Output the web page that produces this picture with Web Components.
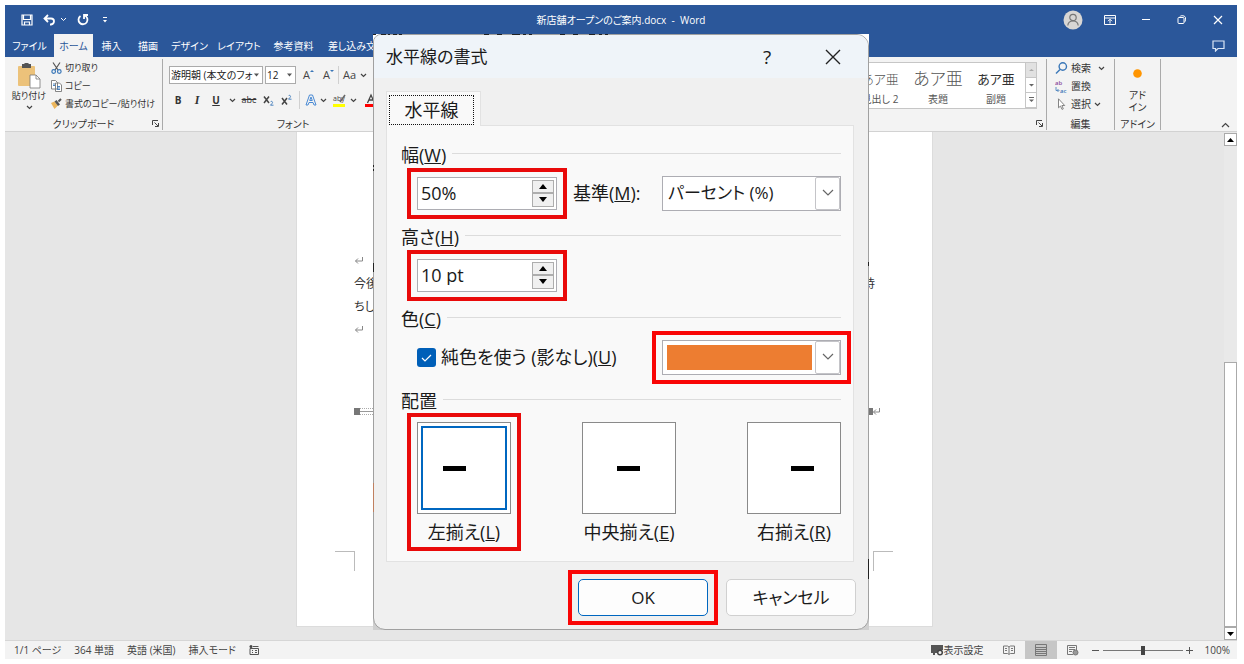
<!DOCTYPE html>
<html lang="ja">
<head>
<meta charset="utf-8">
<title>新店舗オープンのご案内.docx - Word</title>
<style>
  body { margin: 5px 7px 5px 5px; background: #fff; font: 10px/12px "Open Sans", "Noto Sans CJK JP", sans-serif; font-feature-settings: "palt"; color: #333; }
</style>
</head>
<body>
<word-app></word-app>
<script>
const base = `*{box-sizing:border-box} button,select,input{font:inherit;font-feature-settings:inherit;color:inherit;margin:0;border:0;padding:0;background:none} svg{display:block;flex:none} button{display:flex;align-items:center;justify-content:center}`;
function define(name, css, html) {
  const t = document.createElement('template');
  t.innerHTML = `<style>${base}${css}</style>${html}`;
  customElements.define(name, class extends HTMLElement {
    constructor() { super(); this.attachShadow({ mode: 'open' }).append(t.content.cloneNode(true)); }
  });
}
const chev = `<svg class="chev" width="7" height="5" viewBox="0 0 7 5" fill="none" stroke="#444" stroke-width="1.2"><path d="M1 1l2.500 2.500L6 1"/></svg>`;

define('title-bar', `
  :host{display:grid;grid-template-columns:1fr auto 1fr;align-items:center;height:29px;color:#fff;background:#2b579a}
  .quick{display:flex;align-items:center;padding-left:16px;gap:10px}
  .quick .undo{gap:4px}
  .win{display:flex;align-items:center;justify-content:flex-end;padding-right:1px}
  .win button{width:36px;height:24px}
  .win .user{width:38px}
  .title{white-space:pre;padding-top:1px}
  `, `
  <div class="quick">
    <button aria-label="上書き保存"><svg width="12" height="12" viewBox="0 0 12 12" fill="none" stroke="#fff" stroke-width="1.200"><path d="M1 1h10v10H1zM2.500 1v4.500h7V1M3.500 11V8h5v3"/></svg></button>
    <button class="undo" aria-label="元に戻す"><svg width="13" height="12" viewBox="0 0 13 12" fill="none" stroke="#fff" stroke-width="1.800"><path d="M5 1L1.500 4.500L5 8M2 4.500h6c4 0 4 5.500 0 6H7"/></svg><svg width="7" height="5" viewBox="0 0 7 5" fill="none" stroke="#fff"><path d="M1 1l2.500 2.500L6 1"/></svg></button>
    <button aria-label="やり直し"><svg width="12" height="12" viewBox="0 0 12 12" fill="none" stroke="#fff" stroke-width="1.800"><path d="M11 1H7v4M7.500 1.500a4.500 4.500 0 1 1-4 .5"/></svg></button>
    <button aria-label="クイック アクセスのユーザー設定"><svg width="12" height="8" viewBox="0 0 12 8" fill="#fff"><path d="M4 1h4v1H4zM4 4h4l-2 2.500z"/></svg></button>
  </div>
  <div class="title">新店舗オープンのご案内.docx  -  Word</div>
  <div class="win">
    <button class="user" aria-label="アカウント"><svg width="20" height="20" viewBox="0 0 20 20"><circle cx="10" cy="10" r="9.500" fill="#d8d6d4"/><g fill="none" stroke="#777" stroke-width="1.200"><circle cx="10" cy="7.500" r="3.200"/><path d="M4.800 15.500c.6-6 9.800-6 10.400 0"/></g></svg></button>
    <button aria-label="リボンの表示オプション"><svg width="12" height="10" viewBox="0 0 12 10" fill="none" stroke="#fff"><path d="M.5.5h11v9H.5zM.5 3h11M6 8.500v-4M4 6.200l2-2 2 2"/></svg></button>
    <button aria-label="最小化"><svg width="10" height="10" viewBox="0 0 10 10" stroke="#fff"><path d="M1 4.500h8"/></svg></button>
    <button aria-label="元に戻す (縮小)"><svg width="10" height="10" viewBox="0 0 10 10" fill="none" stroke="#fff"><rect x="1" y="2.500" width="6" height="6" rx="1"/><path d="M3 1.500c0-1 5.500-1.500 5.500 1.500S8 7 7.500 7"/></svg></button>
    <button aria-label="閉じる"><svg width="10" height="10" viewBox="0 0 10 10" stroke="#fff" stroke-width="1.200"><path d="M1 1l8 8M9 1L1 9"/></svg></button>
  </div>`);

define('ribbon-tabs', `
  :host{display:flex;justify-content:space-between;height:23px;background:#2b579a;color:#fff}
  nav{display:grid;grid-template-columns:49px 39px 37px 36px 47px 52px 57px 60px}
  nav button{white-space:nowrap}
  nav [aria-current]{background:#f3f3f3;color:#2b579a}
  .note{padding-right:12px}
  `, `
  <nav><button>ファイル</button><button aria-current="true">ホーム</button><button>挿入</button><button>描画</button><button>デザイン</button><button>レイアウト</button><button>参考資料</button><button>差し込み文</button></nav>
  <button class="note" aria-label="コメント"><svg width="13" height="12" viewBox="0 0 13 12" fill="none" stroke="#dbe6f5" stroke-width="1.200"><path d="M1 1h11v7.500H6L3.500 11V8.500H1z"/></svg></button>`);

define('ribbon-group', `
  :host{display:flex;flex-direction:column;border-right:1px solid #aaa;flex:none}
  .body{flex:1;min-height:0}
  .foot{display:flex;align-items:center;justify-content:center;height:13px;position:relative;white-space:nowrap}
  svg{position:absolute;right:3px;top:3px;display:none}
  :host([launcher]) svg{display:block}
  `, `
  <div class="body"><slot></slot></div>
  <div class="foot"><slot name="label"></slot><svg width="7" height="7" viewBox="0 0 7 7" fill="none" stroke="#444"><path d="M.5 5V.5H6M2.500 2.500L6 6M6.500 3v3.500H3"/></svg></div>`);

define('icon-command', `
  :host{display:block;height:18px}
  button{height:18px;gap:3px;white-space:nowrap}
  ::slotted(svg){display:block;flex:none}
  `, `<button><slot></slot></button>`);

define('ribbon-bar', `
  :host{display:flex;height:75px;padding:2px 0 1px;background:#f3f3f3;border-bottom:1px solid #d2d2d2}
  .clip{width:158px}.clip .in{display:flex;font-size:9px}
  .paste{flex-direction:column;width:46px;justify-content:flex-start;padding:4px 0 0 2px;white-space:nowrap}
  .paste span{margin:1px 0 3px}
  .font{width:210px;border:0}
  .row{display:flex;align-items:center;height:18px;margin-top:7px;padding-left:6px;white-space:nowrap}
  .row button{flex:none;height:18px}
  .drop{display:flex;flex:none;position:relative;height:18px;margin-right:2px}
  .drop select{appearance:none;width:100%;height:18px;border:1px solid #ababab;background:#fff;padding:0 9px 0 1px;color:#222}
  .drop svg{position:absolute;right:4px;top:7px;pointer-events:none}
  .bar{width:1px;height:18px;background:#d0d0d0;flex:none}
  .small button{font-size:11px;color:#444}
  .styles{margin-left:auto;width:280px}
  .gallery{display:flex;justify-content:flex-end;height:47px;margin:3px 9px 0 0;border:1px solid #c6c6c6;background:#fff}
  .gallery>button{width:58px;flex-direction:column;color:#555;white-space:nowrap;justify-content:flex-start}
  .gallery b{font-weight:300;height:30px;line-height:32px;font-size:13px}
  .gallery .big b{font-size:17px}
  .gallery .ink b{font-weight:400;color:#333}
  .scroll{display:flex;flex-direction:column;width:11px}
  .scroll button{flex:1;border:1px solid #c6c6c6;border-width:0 0 1px 1px}
  .scroll button:first-child{background:#e1e1e1}
  .edit{width:68px}.edit .in{padding-left:8px}
  .addin{width:46px}
  .addin button{flex-direction:column;width:45px;padding-top:10px;color:#333}
  .addin svg{margin-bottom:11px}
  .collapse{width:76px;align-items:flex-end;justify-content:flex-end;padding:0 7px 2px 0}
  `, `
  <ribbon-group class="clip" launcher>
    <div class="in">
      <button class="paste"><svg width="24" height="26" viewBox="0 0 24 26"><rect x="1" y="3" width="17" height="20" rx="1" fill="#ecc27a"/><path d="M5 1h2c1-1.500 4-1.500 5 0h2v4H5z" fill="#555"/><path d="M13 12h6l4 4v9H13z" fill="#fff" stroke="#777" stroke-width=".8"/><path d="M19 12v4h4" fill="none" stroke="#777" stroke-width=".8"/></svg><span>貼り付け</span>${chev}</button>
      <div>
        <icon-command><svg width="11" height="12" viewBox="0 0 11 12" fill="none"><path d="M2 .5l5 7.500M9 .5L4 8" stroke="#555" stroke-width="1.200"/><g stroke="#3a77b8" stroke-width="1.200"><circle cx="2.700" cy="9.500" r="1.800"/><circle cx="8.300" cy="9.500" r="1.800"/></g></svg>切り取り</icon-command>
        <icon-command><svg width="11" height="12" viewBox="0 0 11 12" fill="#fff" stroke="#777" stroke-width=".9"><path d="M.5.5h4l2 2V9h-6zM4.500 3h4l2 2v6.500h-6z"/><path d="M6 6.500h3M6 8h3M6 9.500h3M2 4h2M2 5.500h2" stroke="#3a77b8"/></svg>コピー</icon-command>
        <icon-command><svg width="11" height="12" viewBox="0 0 11 12"><path d="M0 5l3.500-1.500 3.500 4L3.500 11z" fill="#ecb65c"/><path d="M3.500 3.500l2-1.500 3.500 4.500-2 1.500z" fill="#555"/><path d="M7.500 3.500L10 1" stroke="#555" stroke-width="2"/></svg>書式のコピー/貼り付け</icon-command>
      </div>
    </div>
    <span slot="label">クリップボード</span>
  </ribbon-group>
  <ribbon-group class="font">
    <div class="row">
      <div class="drop" style="width:94px"><select aria-label="フォント"><option>游明朝 (本文のフォン</option></select><svg width="5" height="4" viewBox="0 0 5 4" fill="#555"><path d="M0 .5h5L2.500 3.500z"/></svg></div>
      <div class="drop" style="width:31px"><select aria-label="フォント サイズ"><option>12</option></select><svg width="5" height="4" viewBox="0 0 5 4" fill="#555"><path d="M0 .5h5L2.500 3.500z"/></svg></div>
      <span class="small" style="display:contents">
      <button style="width:21px">A<svg width="4" height="10" viewBox="0 0 4 10" fill="#3a77b8"><path d="M0 2L2 0L4 2z"/></svg></button>
      <button style="width:19px">A<svg width="4" height="10" viewBox="0 0 4 10" fill="#3a77b8"><path d="M0 0h4L2 2z"/></svg></button>
      <span class="bar"></span>
      <button style="width:32px;gap:4px">Aa${chev}</button></span>
    </div>
    <div class="row">
      <button style="width:18px"><strong>B</strong></button>
      <button style="width:20px;font-family:'Liberation Serif',serif;font-size:12px"><em><strong>I</strong></em></button>
      <button style="width:18px"><strong><u>U</u></strong></button>
      <button style="width:14px" aria-label="下線の種類">${chev}</button>
      <button style="width:20px;font-size:9px"><s>abc</s></button>
      <button style="width:18px" aria-label="下付き"><svg width="11" height="12" viewBox="0 0 11 12" fill="none"><path d="M1 2.500l5 6.500M6 2.500L1 9" stroke="#444" stroke-width="1.500"/><path d="M7.500 8c1-1.500 3 0 1.500 1.500l-1.500 1.700h3" stroke="#3a77b8" stroke-width=".9"/></svg></button>
      <button style="width:19px" aria-label="上付き"><svg width="11" height="12" viewBox="0 0 11 12" fill="none"><path d="M1 4l5 6.500M6 4l-5 6.500" stroke="#444" stroke-width="1.500"/><path d="M7.500 2c1-1.500 3 0 1.500 1.500L7.500 5.200h3" stroke="#3a77b8" stroke-width=".9"/></svg></button>
      <span class="bar" style="margin:0 3px"></span>
      <button style="width:25px;gap:3px" aria-label="文字の効果"><svg width="12" height="12" viewBox="0 0 12 12" fill="none" stroke="#4a8ad4" stroke-width="1"><path d="M1 11L4.500 1h3L11 11H9L8 8.500H4L3 11zM4.700 6.500h2.600L6 3z"/></svg>${chev}</button>
      <button style="width:33px;gap:3px" aria-label="蛍光ペンの色"><svg width="15" height="15" viewBox="0 0 15 15"><text x="1" y="8" font-size="7" fill="#444">aby</text><path d="M13 2L8 9" stroke="#666" stroke-width="1.500"/><path d="M1 11h12v3H1z" fill="#ff0"/></svg>${chev}</button>
      <button style="width:20px" aria-label="フォントの色"><svg width="12" height="15" viewBox="0 0 12 15"><path d="M2.500 10L6 2l3.500 8M4 7h4" fill="none" stroke="#444" stroke-width="1.300"/><path d="M0 11h12v3H0z" fill="#f00"/></svg></button>
    </div>
    <span slot="label" style="padding-left:50px">フォント</span>
  </ribbon-group>
  <ribbon-group class="styles" launcher>
    <div class="gallery">
      <button><b>あア亜</b>見出し 2</button>
      <button class="big"><b>あア亜</b>表題</button>
      <button class="ink"><b>あア亜</b>副題</button>
      <div class="scroll"><button aria-label="前の行"><svg width="5" height="4" viewBox="0 0 5 4" fill="#aaa"><path d="M0 3h5L2.500 1z"/></svg></button><button aria-label="次の行"><svg width="5" height="4" viewBox="0 0 5 4" fill="#666"><path d="M0 1h5L2.500 3.500z"/></svg></button><button aria-label="その他"><svg width="5" height="6" viewBox="0 0 5 6" fill="#666"><path d="M0 0h5v1H0zM0 2.500h5L2.500 5z"/></svg></button></div>
    </div>
  </ribbon-group>
  <ribbon-group class="edit">
    <div class="in">
      <icon-command><svg width="13" height="12" viewBox="0 0 13 12" fill="none" stroke="#3a77b8" stroke-width="1.400"><circle cx="7.800" cy="4.500" r="3.700"/><path d="M5 7.500L1 11.500"/></svg>検索<svg width="13" height="5" viewBox="-5 0 13 5" fill="none" stroke="#444" stroke-width="1.200"><path d="M0 1l2.500 2.500L5 1"/></svg></icon-command>
      <icon-command><svg width="13" height="18" viewBox="0 0 13 18"><text x="0" y="8" font-size="6" font-weight="600" fill="#8a4b9c">ab</text><text x="5" y="16" font-size="6" font-weight="600" fill="#3a77b8">ac</text><path d="M1 10v3.500h2.500M2.500 12L4 13.500L2.500 15" fill="none" stroke="#3a77b8" stroke-width=".8"/></svg>置換</icon-command>
      <icon-command><svg width="13" height="12" viewBox="0 0 13 12" fill="#fff" stroke="#777" stroke-width=".9"><path d="M3.500.8v9l2-1.800 1.500 3.400 1.300-.6L6.900 7.500h2.800z"/></svg>選択${chev}</icon-command>
    </div>
    <span slot="label">編集</span>
  </ribbon-group>
  <ribbon-group class="addin">
    <button><svg width="9" height="9" viewBox="0 0 9 9"><circle cx="4.500" cy="4.500" r="4.300" fill="#ff9500"/></svg>アド<br>イン</button>
    <span slot="label">アドイン</span>
  </ribbon-group>
  <button class="collapse" aria-label="リボンを折りたたむ"><svg width="9" height="6" viewBox="0 0 9 6" fill="none" stroke="#444" stroke-width="1.200"><path d="M1 5l3.500-3.500L8 5"/></svg></button>`);

define('document-view', `
  :host{display:flex;flex:1;background:#e6e6e6}
  .desk{flex:1;display:flex;justify-content:center;padding-bottom:13px}
  .page{width:637px;max-width:100%;background:#fff;border:1px solid #dcdcdc;border-top:0;padding:117px 51px 0 57px;font-size:12px;line-height:24px;display:flex;flex-direction:column}
  p{margin:0;height:23px;padding-right:6px;display:flex;align-items:center;justify-content:space-between}
  .rule{display:flex;align-items:center;margin-top:60px;height:20px}
  .rule i{width:6px;height:7px;background:#777}
  .rule hr{flex:1;margin:0;border:0;height:7px;border-block:1px dotted #aaa;background:linear-gradient(#999,#999) 0 2px/100% 1px no-repeat}
  .corners{display:flex;justify-content:space-between;margin:130px -12px 0 -19px}
  .corners i{width:20px;height:20px;border:1px solid #bbb;border-bottom:0}
  .corners i:first-child{border-left:0}.corners i:last-child{border-right:0}
  .scrollbar{display:flex;flex-direction:column;width:13px;padding-top:1px;background:#e9e9e9}
  .scrollbar button{height:13px;background:#fff;border:1px solid #aaa}
  .thumb{flex:none;height:265px;margin-top:auto;background:#fff;border:1px solid #aaa}
  `, `
  <div class="desk"><article class="page">
    <p><svg width="10" height="9" viewBox="0 0 10 9" fill="none" stroke="#888"><path d="M8.500 1v4H1.500M4 2.500L1.500 5L4 7.500"/></svg></p>
    <p><span>今後</span><span>待</span></p>
    <p>ちし</p>
    <p><svg width="10" height="9" viewBox="0 0 10 9" fill="none" stroke="#888"><path d="M8.500 1v4H1.500M4 2.500L1.500 5L4 7.500"/></svg></p>
    <div class="rule"><i></i><hr><i></i><svg width="8" height="9" viewBox="0 0 8 9" fill="none" stroke="#888"><path d="M6.500 1v4H.5M3 2.500L.5 5L3 7.500"/></svg></div>
    <div class="corners"><i></i><i></i></div>
  </article></div>
  <div class="scrollbar"><button aria-label="上へスクロール"><svg width="7" height="4" viewBox="0 0 7 4"><path d="M0 4h7L3.500 0z"/></svg></button><div class="thumb"></div><button aria-label="下へスクロール"><svg width="7" height="4" viewBox="0 0 7 4"><path d="M0 0h7L3.500 4z"/></svg></button></div>`);

define('status-bar', `
  :host{display:flex;align-items:stretch;justify-content:space-between;height:19px;background:#f3f3f3;border-top:1px solid #d6d6d6;color:#444}
  div{display:flex;align-items:center;white-space:nowrap}
  .info{gap:13px;padding-left:9px}
  .view button{height:18px;width:32px}
  .view .disp{width:auto;margin-right:9px}
  .view [aria-pressed=true]{background:#c6c6c6}
  .view .step{width:14px}
  input{appearance:none;width:80px;height:18px;background:linear-gradient(#777,#777) center/100% 1px no-repeat}
  input::-webkit-slider-thumb{appearance:none;width:4px;height:9px;background:#444}
  .pct{padding:0 7px 0 8px}
  `, `
  <div class="info"><span>1/1 ページ</span><span>364 単語</span><span>英語 (米国)</span><span>挿入モード</span><svg width="10" height="10" viewBox="0 0 10 10" fill="none" stroke="#555"><path d="M1 3.500h8.500v6H1zM3 5.500h1M6 5.500h2M3 7.500h1M6 7.500h2M4 1.500h5.500"/><circle cx="2" cy="1.500" r="1.500" fill="#444" stroke="none"/></svg></div>
  <div class="view">
    <button class="disp"><svg width="13" height="12" viewBox="0 0 13 12"><path d="M0 1h12v5H8v3H4v2H2V9H0z" fill="#555"/><circle cx="9" cy="8.500" r="2.300" fill="#f3f3f3" stroke="#444" stroke-width="1.500"/></svg>表示設定</button>
    <button aria-label="閲覧モード"><svg width="12" height="10" viewBox="0 0 12 10" fill="none" stroke="#777"><path d="M.5 1h4L6 2l1.500-1h4v7.500h-4L6 9.500l-1.500-1h-4zM6 2v7M2 3.500h2M2 5.500h2M8 3.500h2M8 5.500h2"/></svg></button>
    <button aria-label="印刷レイアウト" aria-pressed="true"><svg width="12" height="12" viewBox="0 0 12 12" fill="none" stroke="#777"><path d="M.5.5h11v11H.5zM1 3.500h10M1 5.500h10M1 7.500h10M1 9.500h10"/></svg></button>
    <button aria-label="Web レイアウト"><svg width="12" height="11" viewBox="0 0 12 11" fill="none" stroke="#777"><path d="M6 9.500H.5v-9h9V5M2 2.500h6M2 4.500h6M2 6.500h3"/><circle cx="8.500" cy="7.500" r="2.500" fill="#999"/></svg></button>
    <button class="step" aria-label="縮小"><svg width="7" height="7" viewBox="0 0 7 7" stroke="#555"><path d="M0 3.500h7"/></svg></button>
    <input type="range" min="10" max="190" value="100" aria-label="ズーム">
    <button class="step" aria-label="拡大"><svg width="7" height="7" viewBox="0 0 7 7" stroke="#555"><path d="M0 3.500h7M3.500 0v7"/></svg></button>
    <span class="pct">100%</span>
  </div>`);

define('highlight-frame', `
  :host{display:block;position:relative}
  :host::after{content:"";position:absolute;inset:-9px -10px;border:4px solid var(--frame,#e90a0a);pointer-events:none}
  `, `<slot></slot>`);

define('section-heading', `
  :host{display:flex;gap:6px;height:20px;line-height:20px}
  :host::after{content:"";flex:1;height:1px;margin-top:8px;background:#dcdcdc}
  `, `<slot></slot>`);

define('spin-box', `
  :host{display:flex;width:140px;height:33px;border:1px solid #adadb3;background:#fff;padding:2px}
  ::slotted(input){flex:1;min-width:0}
  .steps{display:flex;flex-direction:column;width:22px}
  .steps button{flex:1;border:1px solid #adadad;background:#f0f0f0}
  `, `<slot></slot><div class="steps"><button type="button" aria-label="増やす"><svg width="10" height="5" viewBox="0 0 10 5"><path d="M1 5h8L5 0z"/></svg></button><button type="button" aria-label="減らす"><svg width="10" height="5" viewBox="0 0 10 5"><path d="M1 0h8L5 5z"/></svg></button></div>`);

define('combo-box', `
  :host{display:block;position:relative;width:179px;height:35px}
  .arrow{position:absolute;inset:1px 1px 1px auto;width:25px;display:flex;align-items:center;justify-content:center;border:1px solid #c4c4c8;border-radius:2px;background:#fff;pointer-events:none}
  `, `<slot></slot><span class="arrow"><svg width="12" height="8" viewBox="0 0 12 8" fill="none" stroke="#666" stroke-width="1.200"><path d="M1 1l5 5 5-5"/></svg></span>`);

define('rule-dialog', `
  :host{display:block;width:496px;max-width:100%;font-size:18px;line-height:20px;color:#1a1a1a;background:linear-gradient(#fff 90%,#cfcfcf 90%)}
  .under{position:absolute;top:0;left:0;pointer-events:none}
  .frame{border:1px solid #a0a0a0;border-radius:8px 12px 12px 12px;background:#f0f0f0;overflow:hidden;padding-bottom:13px}
  header{display:flex;align-items:center;height:43px;padding:0 10px 0 12px;background:#eff4f9}
  h1{font:inherit;font-size:17px;margin:0;flex:1}
  header button{width:50px;height:40px;margin-left:16px;font-size:19px}
  .tabs{display:flex;padding:13px 0 0 12px}
  .tabs button{width:95px;height:35px;margin-bottom:-1px;border:1px solid #e2e2e2;border-bottom:0;background:#f9f9f9;position:relative;padding:2px 6px 1px 2px}
  .tabs span{flex:1;line-height:28px;border:1px dotted #111;outline:1px solid #f9f9f9}
  .panel{margin:0 14px 0 12px;border:1px solid #e2e2e2;background:#f9f9f9;padding:19px 12px 19px 14px}
  .row{display:flex;align-items:center;height:34px;margin:11px 0 17px;padding-left:16px;white-space:nowrap}
  .row combo-box{margin-left:auto}
  .base{margin-left:16px}
  spin-box input{padding-left:1px}
  select{appearance:none;display:block;width:100%;height:35px;border:1px solid #adadb3;background:#fff;padding:0 28px 0 5px;font-size:17px}
  #color{padding:4px 28px 4px 4px;background:#ed7d31 content-box;background-clip:content-box}
  .row .tint{margin-left:auto;background:#fff}
  .tint,footer{--frame:#f90505}
  #solid{appearance:none;width:19px;height:19px;border-radius:3px;margin-right:5px;background:#005fb8 url("data:image/svg+xml,%3Csvg xmlns='http://www.w3.org/2000/svg' width='19' height='19' fill='none' stroke='white' stroke-width='1.200'%3E%3Cpath d='M5 10l3 3 6-6'/%3E%3C/svg%3E")}
  .aligns{display:flex;justify-content:space-between;margin-top:11px;padding-left:16px}
  .aligns label{display:flex;flex-direction:column;align-items:center;gap:8px;width:94px;white-space:nowrap}
  .aligns input{appearance:none;width:94px;height:92px;border:1px solid #8a8a8a;background:linear-gradient(#000,#000) var(--x) 43px/23px 5px no-repeat,#fff}
  .aligns input:checked{outline:2px solid #0067c0;outline-offset:-6px}
  footer{display:flex;justify-content:flex-end;gap:18px;padding:17px 12px 0 0}
  footer button{width:130px;height:37px;border:1px solid #d0d0d0;border-radius:5px;background:#fdfdfd;font-size:17px}
  footer .ok{border-color:#0067c0}
  `, `
  <form class="frame" role="dialog" aria-labelledby="name">
    <header><h1 id="name">水平線の書式</h1><button type="button" aria-label="ヘルプ">?</button><button type="button" aria-label="閉じる"><svg width="16" height="16" viewBox="0 0 16 16" stroke="#222" stroke-width="1.400"><path d="M1 1l14 14M15 1L1 15"/></svg></button></header>
    <div class="tabs"><button type="button"><span>水平線</span></button></div>
    <div class="panel">
      <section-heading><label for="width">幅(<u>W</u>)</label></section-heading>
      <div class="row">
        <highlight-frame><spin-box><input id="width" value="50%"></spin-box></highlight-frame>
        <label class="base" for="unit">基準(<u>M</u>):</label>
        <combo-box><select id="unit"><option>パーセント (%)</option></select></combo-box>
      </div>
      <section-heading><label for="height">高さ(<u>H</u>)</label></section-heading>
      <div class="row"><highlight-frame><spin-box><input id="height" value="10 pt"></spin-box></highlight-frame></div>
      <section-heading><label for="color">色(<u>C</u>)</label></section-heading>
      <div class="row">
        <input type="checkbox" id="solid" checked><label for="solid">純色を使う (影なし)(<u>U</u>)</label>
        <highlight-frame class="tint"><combo-box><select id="color"><option value="#ed7d31"></option></select></combo-box></highlight-frame>
      </div>
      <section-heading>配置</section-heading>
      <div class="aligns">
        <highlight-frame><label><input type="radio" name="align" checked style="--x:25px"><span>左揃え(<u>L</u>)</span></label></highlight-frame>
        <label><input type="radio" name="align" style="--x:34px"><span>中央揃え(<u>E</u>)</span></label>
        <label><input type="radio" name="align" style="--x:43px"><span>右揃え(<u>R</u>)</span></label>
      </div>
    </div>
    <footer><highlight-frame><button class="ok" type="button">OK</button></highlight-frame><button type="button">キャンセル</button></footer>
  </form>
  <svg class="under" width="496" height="596" viewBox="0 0 496 596" fill="none" stroke="#222"><path d="M0 .5h3M8 .5h5M15 .5h2M20 .5h4M26 .5h3M111 .5h5M124 .5h5M139 .5h8M150 .5h3M156 .5h3M187 .5h5M200 .5h5M216 .5h6M226 .5h3M232 .5h3M.5 131v2M.5 135v2M.5 229v9M495.500 228v4M495.500 525v20"/><path d="M.5 449v29" stroke="#c08060"/></svg>`);

define('word-app', `
  :host{display:flex;flex-direction:column;position:relative;min-height:calc(100vh - 10px)}
  rule-dialog{position:absolute;top:29px;left:0;right:0;margin:0 auto}
  `, `<title-bar></title-bar><ribbon-tabs></ribbon-tabs><ribbon-bar></ribbon-bar><document-view></document-view><status-bar></status-bar><rule-dialog></rule-dialog>`);
</script>
</body>
</html>
